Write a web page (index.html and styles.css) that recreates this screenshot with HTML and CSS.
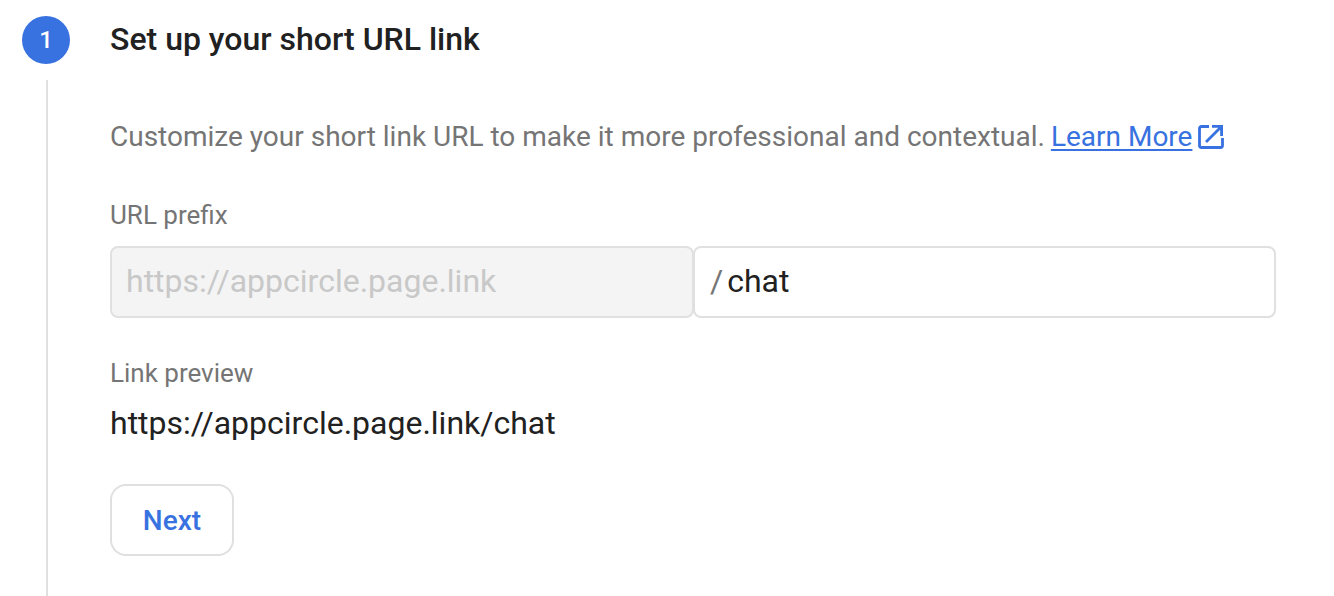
FILE: index.html
```html
<!DOCTYPE html>
<html lang="en">
<head>
<meta charset="utf-8">
<title>Set up your short URL link</title>
<link rel="stylesheet" href="styles.css">
</head>
<body>
<div class="step">
  <div class="rail">
    <div class="badge">1</div>
    <div class="line"></div>
  </div>
  <main class="content">
    <h1 class="title">Set up your short URL link</h1>
    <p class="desc">Customize your short link URL to make it more professional and contextual. <a class="more" href="#">Learn More</a><svg class="ext" viewBox="0 0 28 28" width="28" height="28" aria-hidden="true"><path d="M12 3.5H4.5a2 2 0 0 0-2 2v17a2 2 0 0 0 2 2h19a2 2 0 0 0 2-2V15" fill="none" stroke="#3871e0" stroke-width="2.8"/><path d="M9 19 23 5M15 3.3h9.6v9.6" fill="none" stroke="#3871e0" stroke-width="2.8"/></svg></p>
    <div class="label">URL prefix</div>
    <div class="fields">
      <div class="field prefix">https://appcircle.page.link</div>
      <div class="field suffix"><span class="slash">/</span><span>chat</span></div>
    </div>
    <div class="label preview-label">Link preview</div>
    <div class="preview">https://appcircle.page.link/chat</div>
    <button class="next" type="button">Next</button>
  </main>
</div>
</body>
</html>
```
FILE: styles.css
```css
* { box-sizing: border-box; }
html, body { margin: 0; height: 100%; overflow: hidden; background: #fff; }
body { font-family: Roboto, "Liberation Sans", sans-serif; color: #212121; }
.step { display: flex; height: 596px; padding: 16px 58px 0 22px; }
.rail { width: 48px; display: flex; flex-direction: column; flex: none; }
.badge { width: 48px; height: 48px; border-radius: 50%; background: #3871e0; color: #fff; font-size: 24px; font-weight: 500; display: flex; align-items: center; justify-content: center; flex: none; }
.line { width: 2px; flex: 1; margin: 16px 0 0 24px; background: #e0e0e0; }
.content { flex: 1; margin-left: 40px; min-width: 0; }
.title { margin: 0; font-size: 32px; line-height: 46px; font-weight: 500; color: #212121; }
.desc { margin: 54px 0 0; font-size: 28px; line-height: 42px; color: #757575; display: flex; align-items: center; white-space: pre-wrap; }
.more { color: #3871e0; text-decoration: underline; text-decoration-thickness: 2px; text-underline-offset: 3px; margin-left: -1px; }
.ext { margin-left: 5px; flex: none; }
.label { margin-top: 41px; font-size: 26px; line-height: 32px; color: #757575; }
.fields { display: flex; margin-top: 15px; height: 72px; }
.field { height: 72px; border: 2px solid #e0e0e0; border-radius: 8px; font-size: 32px; display: flex; align-items: center; padding: 0 15px 2px; }
.prefix { width: 584px; flex: none; background: #f4f4f4; color: #c8c8c8; padding-left: 14px; }
.suffix { flex: 1; margin-left: -1px; background: #fff; gap: 4px; color: #212121; }
.slash { color: #757575; }
.preview-label { margin-top: 39px; }
.preview { margin-top: 12px; font-size: 32px; line-height: 44px; color: #212121; }
.next { display: block; margin-top: 39px; width: 124px; height: 72px; background: #fff; border: 2px solid #e0e0e0; border-radius: 16px; color: #3871e0; font: 500 28px Roboto, sans-serif; padding: 0; }
```
